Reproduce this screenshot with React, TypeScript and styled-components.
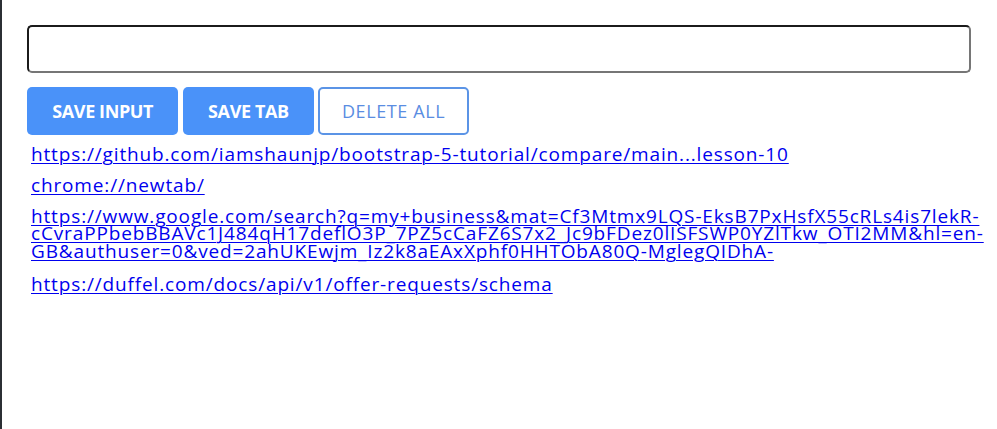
import React from "react";
import styled, { createGlobalStyle } from "styled-components";

const Global = createGlobalStyle`
  html, body { margin: 0; padding: 0; background: #ffffff; }
  body { font-family: "Open Sans", "Liberation Sans", sans-serif; }
`;

const Page = styled.div`
  box-sizing: border-box;
  min-height: 429px;
  border-left: 2px solid #2b2f34;
  padding: 25px 26px 0 25px;
  background: #ffffff;
`;

const TextInput = styled.input`
  display: block;
  box-sizing: border-box;
  width: 100%;
  height: 48px;
  margin: 0;
  padding: 0 10px;
  border-style: solid;
  border-width: 2px;
  border-color: #1b1b1b #767676 #767676 #1b1b1b;
  border-radius: 5px;
  background: #ffffff;
  font-family: inherit;
  font-size: 16px;
  outline: none;
`;

const ButtonRow = styled.div`
  display: flex;
  gap: 4.5px;
  margin-top: 14px;
`;

const Button = styled.button<{ $outline?: boolean }>`
  box-sizing: border-box;
  height: 48px;
  margin: 0;
  padding: 0 ${(p) => (p.$outline ? "21.5px" : "25.3px")};
  border-radius: 5px;
  border: ${(p) => (p.$outline ? "2px solid #5b94e6" : "none")};
  background: ${(p) => (p.$outline ? "#ffffff" : "#4a92f9")};
  color: ${(p) => (p.$outline ? "#5a8de2" : "#ffffff")};
  font-family: "Open Sans", "Liberation Sans", sans-serif;
  font-weight: ${(p) => (p.$outline ? 400 : 700)};
  font-size: 18px;
  letter-spacing: ${(p) => (p.$outline ? "0.6px" : "-0.4px")};
  cursor: pointer;
`;

const LinkList = styled.ul`
  list-style: none;
  margin: 11px -24px 0 0;
  padding: 0 0 0 4px;
`;

const LinkItem = styled.li<{ $extra?: number }>`
  margin-bottom: ${(p) => 13.7 + (p.$extra ?? 0)}px;
  line-height: 16.3px;
`;

const Link = styled.a`
  color: #0000ee;
  font-family: "Open Sans", "Liberation Sans", sans-serif;
  font-size: 19px;
  letter-spacing: 0.85px;
  text-decoration: underline;
  text-decoration-thickness: 1px;
  text-underline-offset: 2px;
`;

const links = [
  { href: "https://github.com/iamshaunjp/bootstrap-5-tutorial/compare/main...lesson-10", extra: 0 },
  { href: "chrome://newtab/", extra: 0 },
  {
    href:
      "https://www.google.com/search?q=my+business&mat=Cf3Mtmx9LQS-EksB7PxHsfX55cRLs4is7lekR-cCvraPPbebBBAVc1J484qH17deflO3P_7PZ5cCaFZ6S7x2_Jc9bFDez0lISFSWP0YZlTkw_OTI2MM&hl=en-GB&authuser=0&ved=2ahUKEwjm_Iz2k8aEAxXphf0HHTObA80Q-MglegQIDhA-",
    extra: 2,
  },
  { href: "https://duffel.com/docs/api/v1/offer-requests/schema", extra: 0 },
];

export default function App() {
  return (
    <>
      <Global />
      <Page>
        <TextInput type="text" />
        <ButtonRow>
          <Button>SAVE INPUT</Button>
          <Button>SAVE TAB</Button>
          <Button $outline>DELETE ALL</Button>
        </ButtonRow>
        <LinkList>
          {links.map((l) => (
            <LinkItem key={l.href} $extra={l.extra}>
              <Link href={l.href} target="_blank">
                {l.href}
              </Link>
            </LinkItem>
          ))}
        </LinkList>
      </Page>
    </>
  );
}
